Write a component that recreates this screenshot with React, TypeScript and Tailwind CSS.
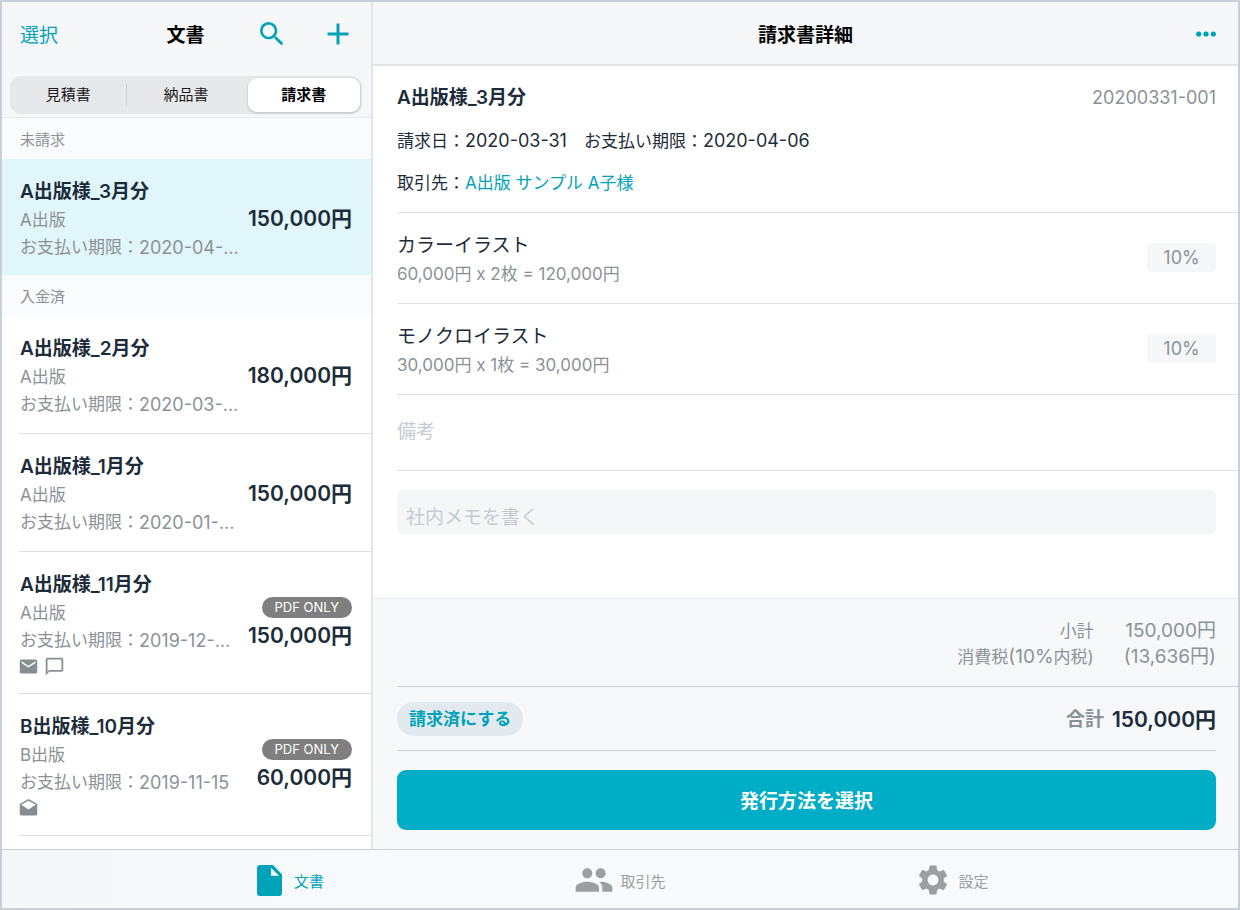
import { useState } from "react";
import {
  MdAdd,
  MdChatBubbleOutline,
  MdDrafts,
  MdEmail,
  MdPeople,
  MdSearch,
  MdSettings,
} from "react-icons/md";

type Invoice = {
  title: string;
  client: string;
  due: string;
  amount: string;
  pdfOnly?: boolean;
  marks?: ("sent" | "opened" | "memo")[];
};

const unbilled: Invoice[] = [
  { title: "A出版様_3月分", client: "A出版", due: "2020-04-...", amount: "150,000円" },
];

const paid: Invoice[] = [
  { title: "A出版様_2月分", client: "A出版", due: "2020-03-...", amount: "180,000円" },
  { title: "A出版様_1月分", client: "A出版", due: "2020-01-...", amount: "150,000円" },
  {
    title: "A出版様_11月分",
    client: "A出版",
    due: "2019-12-...",
    amount: "150,000円",
    pdfOnly: true,
    marks: ["sent", "memo"],
  },
  {
    title: "B出版様_10月分",
    client: "B出版",
    due: "2019-11-15",
    amount: "60,000円",
    pdfOnly: true,
    marks: ["opened"],
  },
];

const lines = [
  { name: "カラーイラスト", detail: "60,000円 x 2枚 = 120,000円", rate: "10%" },
  { name: "モノクロイラスト", detail: "30,000円 x 1枚 = 30,000円", rate: "10%" },
];

const kinds = ["見積書", "納品書", "請求書"];

const markIcons = {
  sent: MdEmail,
  opened: MdDrafts,
  memo: MdChatBubbleOutline,
};

function SectionTitle({ children }: { children: string }) {
  return (
    <h2 className="flex h-[41px] items-center bg-[#fafbfd] pt-[3px] pl-[18px] text-[15px] text-[#8b9296]">
      {children}
    </h2>
  );
}

function InvoiceBody({ invoice }: { invoice: Invoice }) {
  return (
    <div className="flex items-center gap-2">
      <div className="min-w-0 flex-1">
        <h3 className="mb-[3px] truncate text-[19px] leading-6 font-semibold">{invoice.title}</h3>
        <p className="truncate text-[17px] leading-[27px] text-[#8b9296]">{invoice.client}</p>
        <p className="flex text-[17px] leading-[27px] whitespace-nowrap text-[#8b9296]">
          お支払い期限：<span className="text-[18px]">{invoice.due}</span>
        </p>
        {invoice.marks && (
          <div className="flex h-6 items-center gap-[7px] text-[#868e92]">
            {invoice.marks.map((mark) => {
              const Icon = markIcons[mark];
              return <Icon key={mark} className="-ml-0.5 size-[21px]" />;
            })}
          </div>
        )}
      </div>
      <div className="flex shrink-0 flex-col items-end gap-1 pb-1">
        {invoice.pdfOnly && (
          <span className="rounded-full bg-[#7f7f7f] px-[13px] text-[13px] leading-[21px] text-white">
            PDF ONLY
          </span>
        )}
        <span className="text-[21px] leading-7 font-semibold">{invoice.amount}</span>
      </div>
    </div>
  );
}

function Sidebar() {
  const [kind, setKind] = useState("請求書");
  return (
    <aside className="w-[371px] shrink-0 border-r-2 border-[#e3e5e8] bg-white">
      <div className="border-b border-[#e8eaec] bg-[#f6f7f9] pb-[3px]">
        <header className="grid h-16 grid-cols-[1fr_auto_1fr] items-center pr-[15px] pl-[13px]">
          <button className="justify-self-start pt-1 pl-[5px] text-[19px] text-[#00a2b8]">
            選択
          </button>
          <h1 className="pt-1 text-[19px] font-bold text-black">文書</h1>
          <div className="flex items-center gap-8 justify-self-end text-[#00a2b8]">
            <button aria-label="検索">
              <MdSearch className="size-8" />
            </button>
            <button aria-label="追加">
              <MdAdd className="size-9" />
            </button>
          </div>
        </header>
        <div className="mt-[10px] mr-[9px] ml-2 grid grid-cols-3 rounded-[11px] bg-[#e7e8ea]">
          {kinds.map((name, index) => (
            <button
              key={name}
              aria-pressed={name === kind}
              onClick={() => setKind(name)}
              className={
                name === kind
                  ? "my-0.5 mr-0.5 ml-[3px] h-[34px] rounded-[9px] bg-white text-[15px] font-bold text-black shadow-[0_1px_3px_rgba(0,0,0,0.2)]"
                  : index === 0
                    ? "my-2 h-[22px] border-r border-[#cdcfd1] text-[15px] text-[#1c1c1e]"
                    : "my-2 h-[22px] text-[15px] text-[#1c1c1e]"
              }
            >
              {name}
            </button>
          ))}
        </div>
      </div>
      <SectionTitle>未請求</SectionTitle>
      <ul>
        {unbilled.map((invoice) => (
          <li key={invoice.title} className="bg-[#e1f6fa] pt-[21px] pr-[19px] pb-[14px] pl-[18px]">
            <InvoiceBody invoice={invoice} />
          </li>
        ))}
      </ul>
      <SectionTitle>入金済</SectionTitle>
      <ul className="pl-[17px]">
        {paid.map((invoice) => (
          <li
            key={invoice.title}
            className="border-b border-[#dcdee0] pt-[21px] pr-[19px] pb-[15px] pl-px"
          >
            <InvoiceBody invoice={invoice} />
          </li>
        ))}
      </ul>
    </aside>
  );
}

function Detail() {
  return (
    <main className="flex min-w-0 flex-1 flex-col bg-white">
      <header className="grid h-16 grid-cols-[1fr_auto_1fr] items-center border-b-2 border-[#e1e3e4] bg-[#f5f7f9] pt-0.5 pr-5 pl-5">
        <h1 className="col-start-2 pt-1 text-[19px] font-bold text-black">請求書詳細</h1>
        <button aria-label="メニュー" className="justify-self-end">
          <svg viewBox="0 0 24 8" className="h-2 w-6" fill="#00a2b8">
            <circle cx="4.7" cy="4" r="2.6" />
            <circle cx="12" cy="4" r="2.6" />
            <circle cx="19.3" cy="4" r="2.6" />
          </svg>
        </button>
      </header>

      <div className="flex-1 pb-16 pl-6">
        <section className="border-b border-[#dfe1e3] pt-[18px] pr-[22px] pb-[15px]">
          <div className="flex items-center justify-between">
            <h2 className="text-[19px] leading-7 font-semibold">A出版様_3月分</h2>
            <span className="text-[18px] leading-7 text-[#8b9296]">20200331-001</span>
          </div>
          <p className="mt-[15px] text-[17px] leading-7">
            請求日：<span className="text-[18px]">2020-03-31</span>　お支払い期限：
            <span className="text-[18px]">2020-04-06</span>
          </p>
          <p className="mt-[14px] text-[17px] leading-7">
            取引先：
            <a href="#client" className="text-[#00a2b8]">
              A出版 サンプル A子様
            </a>
          </p>
        </section>

        {lines.map((line) => (
          <section
            key={line.name}
            className="flex items-center justify-between border-b border-[#dfe1e3] pt-[14px] pr-[22px] pb-[15px]"
          >
            <div className="pt-[5px]">
              <h3 className="text-[19px] leading-7">{line.name}</h3>
              <p className="text-[17px] leading-7 text-[#8b9296]">{line.detail}</p>
            </div>
            <span className="w-[69px] rounded bg-[#f5f7f9] text-center text-[18px] leading-[29px] text-[#8b9296]">
              {line.rate}
            </span>
          </section>
        ))}

        <div className="border-b border-[#dfe1e3] pt-[23px] pr-[22px] pb-6">
          <input
            aria-label="備考"
            placeholder="備考"
            className="block h-7 w-full text-[19px] outline-none placeholder:text-[#c5cbd0]"
          />
        </div>
        <div className="pt-[19px] pr-[22px]">
          <input
            aria-label="社内メモ"
            placeholder="社内メモを書く"
            className="block h-11 w-full rounded-md bg-[#f5f6f8] px-[9px] pt-[10px] text-[19px] outline-none placeholder:text-[#c5cbd0]"
          />
        </div>
      </div>

      <footer className="border-t border-[#e4ebef] bg-[#f6f8fa] pb-[19px] pl-6">
        <dl className="grid grid-cols-[1fr_auto] gap-x-[30px] border-b border-[#cfd3d7] pt-[19px] pr-[22px] pb-4 text-right text-[17px] leading-[26px] text-[#8b9296]">
          <dt>小計</dt>
          <dd className="text-[19px]">150,000円</dd>
          <dt>
            消費税<span className="text-[19px]">(10%</span>内税)
          </dt>
          <dd className="text-[19px]">(13,636円)</dd>
        </dl>
        <div className="mr-[22px] flex h-16 items-center justify-between border-b border-[#cfd3d7]">
          <button className="h-[34px] rounded-full bg-[#e2eaf0] px-3 pt-0.5 text-[17px] font-bold text-[#00a2b8]">
            請求済にする
          </button>
          <p className="flex items-center gap-2 pt-0.5">
            <span className="pt-0.5 text-[19px] font-semibold text-[#8b9296]">合計</span>
            <span className="text-[21px] font-semibold">150,000円</span>
          </p>
        </div>
        <div className="pt-[19px] pr-[22px]">
          <button className="h-[60px] w-full rounded-[9px] bg-[#00adc6] pt-1 text-[19px] font-bold text-white">
            発行方法を選択
          </button>
        </div>
      </footer>
    </main>
  );
}

function DocumentIcon() {
  return (
    <svg viewBox="0 0 25 31" className="h-[31px] w-[25px]" fill="currentColor" aria-hidden="true">
      <path
        fillRule="evenodd"
        d="M3 0h13l9 9.5V28a3 3 0 0 1-3 3H3a3 3 0 0 1-3-3V3a3 3 0 0 1 3-3zM14 2.8v8h8z"
      />
    </svg>
  );
}

function TabBar() {
  return (
    <nav className="border-t border-[#cdd1d5] bg-linear-to-r from-[#f5f7f9] to-[#f7fbfc] to-35%">
      <div className="mx-auto grid h-[58px] w-4/5 grid-cols-3 pt-0.5 text-[15px] text-[#9c9fa1]">
        <a href="#documents" className="flex items-center justify-center gap-3 text-[#00a2b8]">
          <DocumentIcon />
          <span className="pt-1">文書</span>
        </a>
        <a href="#clients" className="flex items-center justify-center gap-1.5">
          <MdPeople className="size-10" />
          <span className="pt-1">取引先</span>
        </a>
        <a href="#settings" className="flex items-center justify-center gap-2 pl-1">
          <MdSettings className="size-9" />
          <span className="pt-1">設定</span>
        </a>
      </div>
    </nav>
  );
}

export default function App() {
  return (
    <div className="flex min-h-screen flex-col border-2 border-[#c9cfd7] font-['Inter','Noto_Sans_CJK_JP',sans-serif] text-[#1d2c3a]">
      <div className="flex flex-1">
        <Sidebar />
        <Detail />
      </div>
      <TabBar />
    </div>
  );
}
